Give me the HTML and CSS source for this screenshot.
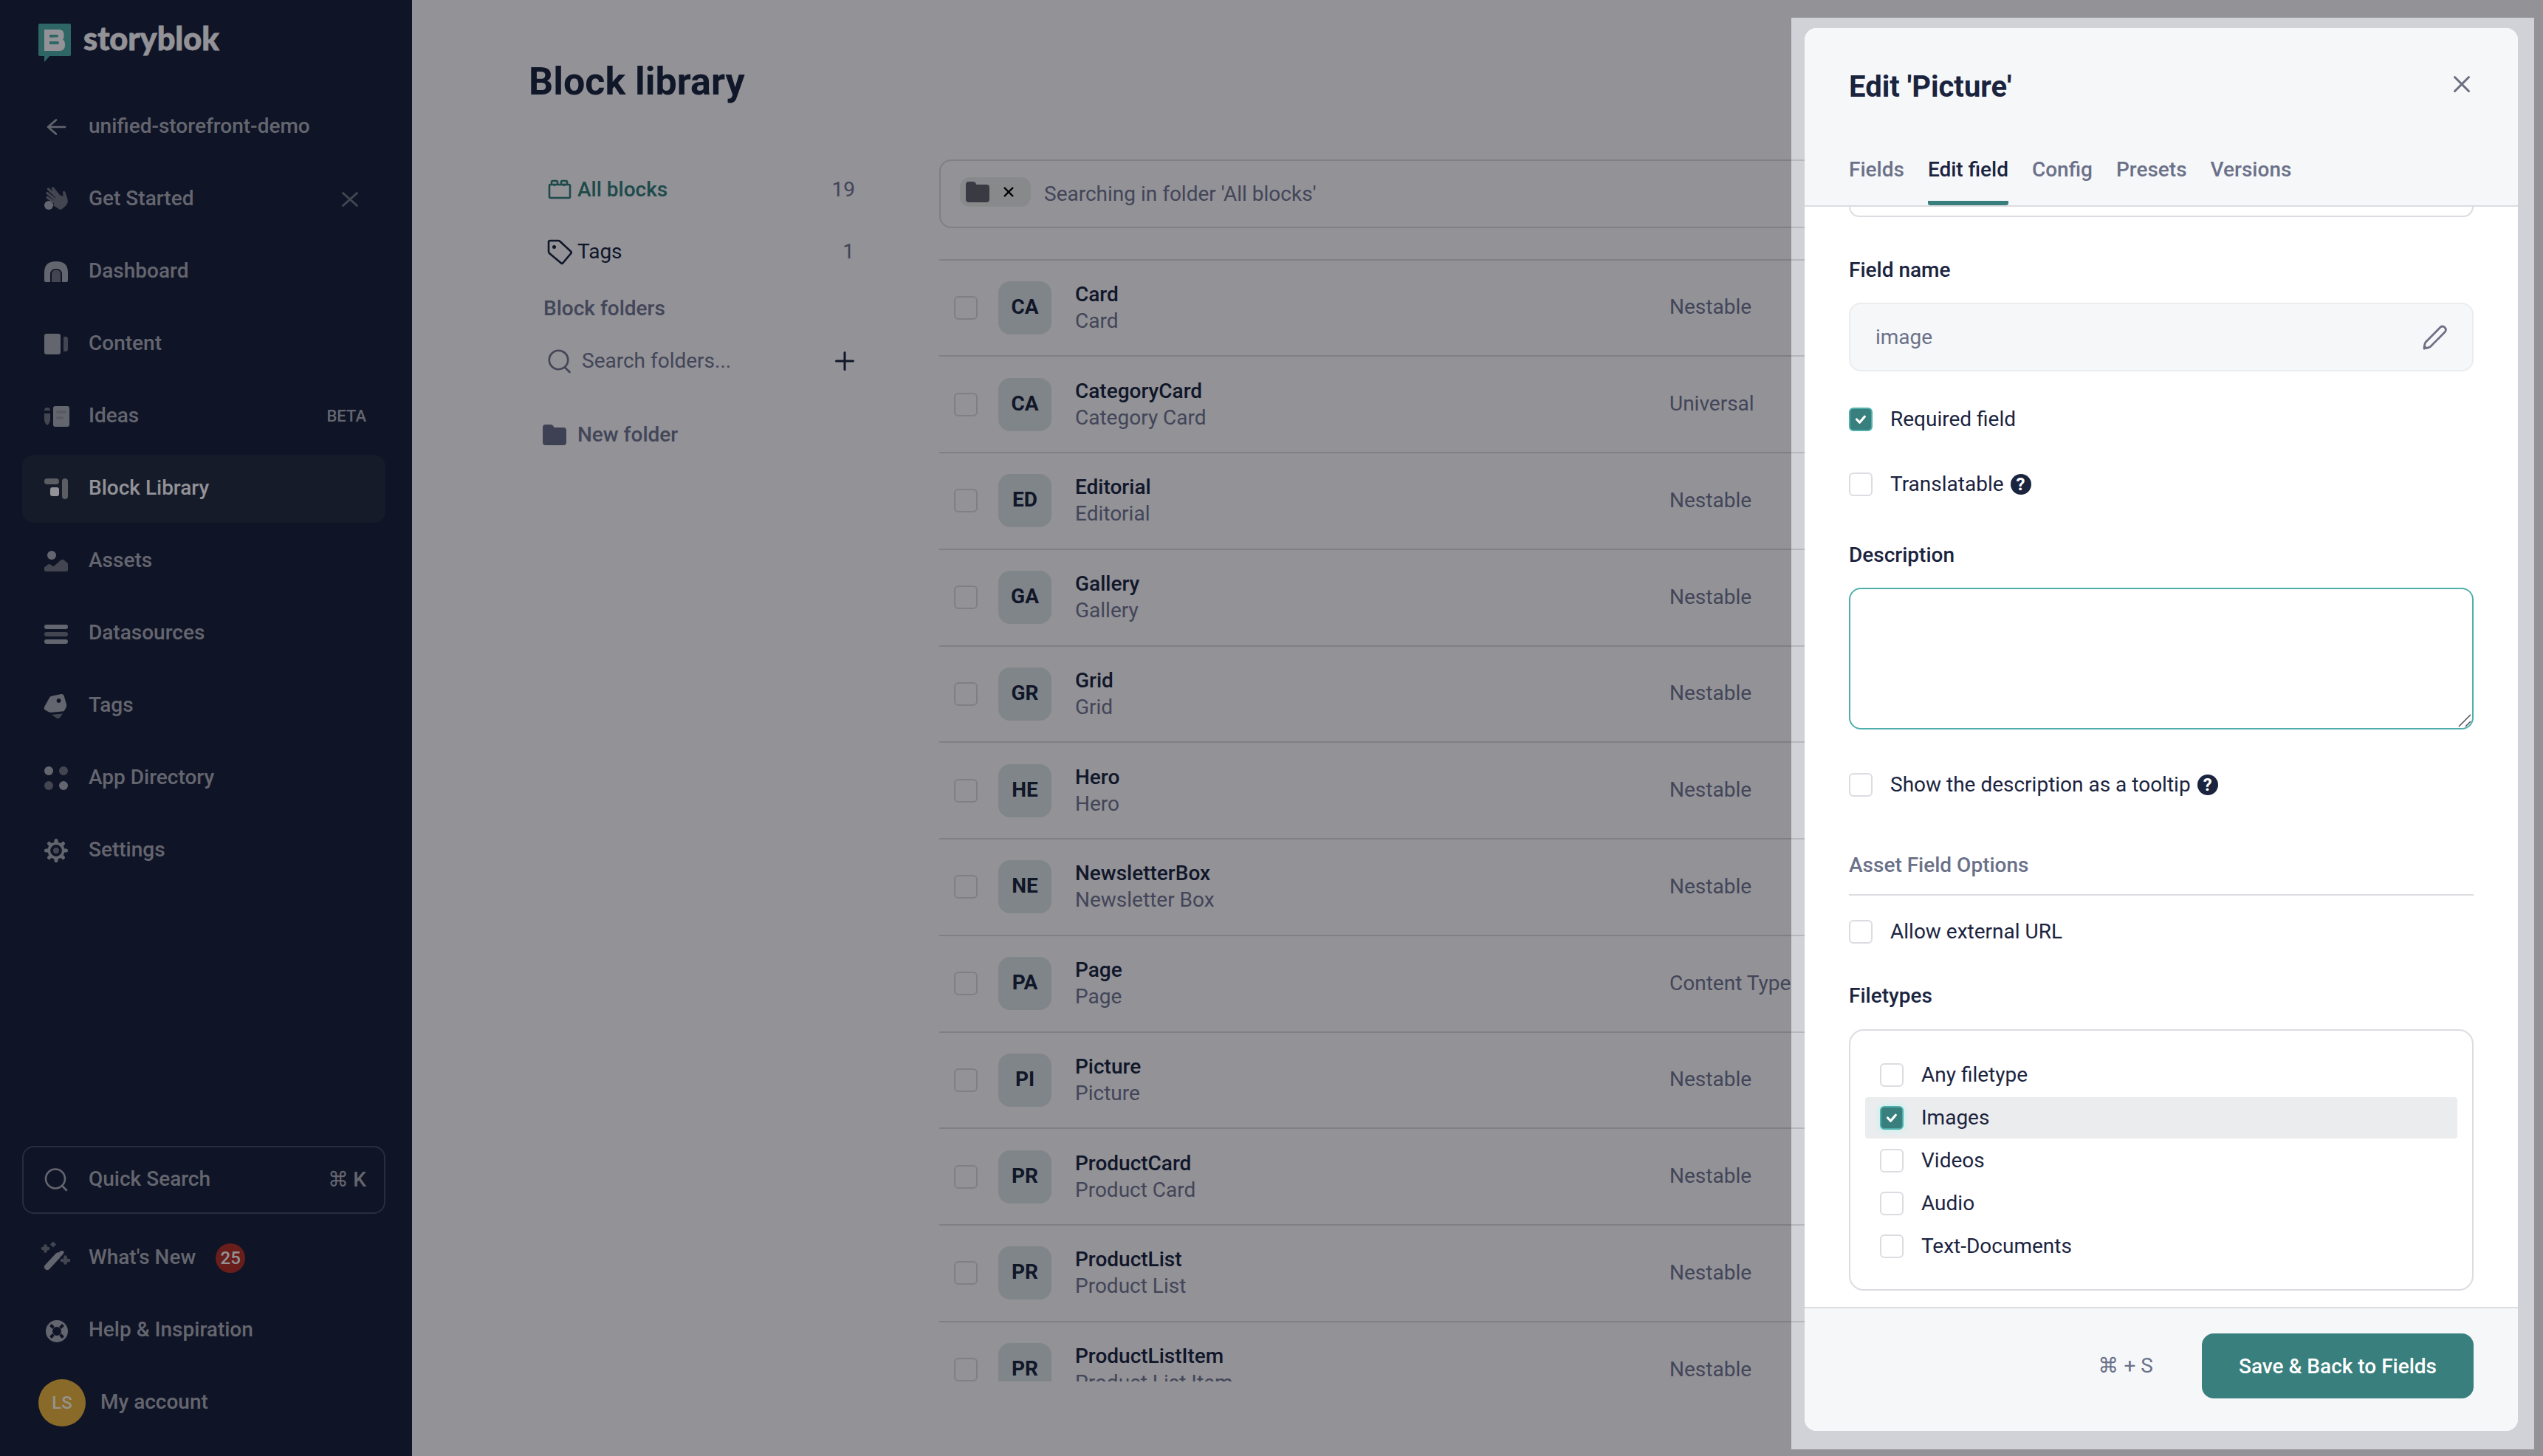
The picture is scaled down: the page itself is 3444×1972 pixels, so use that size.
FILE: index.html
```html
<!DOCTYPE html>
<html lang="en">
<head>
<meta charset="utf-8">
<title>Block library</title>
<link rel="stylesheet" href="styles.css">
</head>
<body>
<div class="app">
  <aside class="sidebar">
    <div class="logo">
      <svg width="44" height="52" viewBox="0 0 44 52">
        <rect class="brand" width="44" height="44" rx="2"/>
        <path class="brand" d="M8 43v9l8-9z"/>
        <rect class="bright" x="8" y="8" width="26.500" height="16" rx="6"/>
        <rect class="bright" x="8" y="20" width="28" height="17" rx="7"/>
        <rect class="bright" x="8" y="8" width="10" height="29"/>
        <rect class="brand" x="15" y="15" width="12" height="3.600" rx="1.800"/>
        <rect class="brand" x="15" y="24" width="13" height="4" rx="2"/>
        <rect class="brand" x="15" y="15" width="5" height="3.600"/>
        <rect class="brand" x="15" y="24" width="5" height="4"/>
      </svg>
      <svg class="wordmark" width="190" height="52" viewBox="0 0 190 52"><text x="0" y="36" textLength="184" lengthAdjust="spacingAndGlyphs">storyblok</text></svg>
    </div>
    <nav class="nav">
      <a class="nav-item"><svg class="icon" viewBox="0 0 32 32"><path class="line" d="M28 16H5M16 6.500 5 16l11 9.500"/></svg><span>unified-storefront-demo</span></a>
      <a class="nav-item"><svg class="icon" viewBox="0 0 32 32"><path class="dim" d="M12 24 21 30Q26 29 31 22Q32.500 19 31 14L28.500 6.500Q27 3.500 25 6L25.500 12 18 9Z"/><path class="finger" d="M19 15 12 1.500M17 14 11.500 1M22 14 12 1.500M20 16 5.500 2M18 19 4 7.500M17 22 4 13.500"/><circle class="fill" cx="6" cy="24" r="6"/></svg><span>Get Started</span><svg class="nav-close" viewBox="0 0 24 24"><path d="M2.500 3.500 21.500 20.500M21.500 3.500 2.500 20.500"/></svg></a>
      <a class="nav-item"><svg class="icon" viewBox="0 0 32 32"><path class="fill" d="M0 17Q0 2 16 2t16 15v11q0 2-2 2h-6V20q0-8-8-8t-8 8v10H2q-2 0-2-2z"/><path class="dim" d="M10 30V19.500q0-6 6-6t6 6V30z"/></svg><span>Dashboard</span></a>
      <a class="nav-item"><svg class="icon" viewBox="0 0 32 32"><rect class="fill" y="2" width="22" height="28" rx="3"/><path class="dim" d="M26 6h3q3 0 3 3v14q0 3-3 3h-3z"/></svg><span>Content</span></a>
      <a class="nav-item"><svg class="icon" viewBox="0 0 32 32"><path class="dim" d="M0 8q0-4 4-4t4 4zM0 12h8v9q-1 5-4 7-3-2-4-7z"/><rect class="fill" x="12" y="2" width="22" height="28" rx="3"/><path class="page-lines" d="M18 10h10M18 18h6"/></svg><span>Ideas</span><small class="beta">BETA</small></a>
      <a class="nav-item nav-item-active"><svg class="icon" viewBox="0 0 32 32"><rect class="mid" y="2" width="20" height="8" rx="4"/><rect class="mid" x="24" y="2" width="8" height="28" rx="4"/><rect class="bright" x="8" y="14" width="12" height="12" rx="3"/></svg><span>Block Library</span></a>
      <a class="nav-item"><svg class="icon" viewBox="0 0 32 32"><circle class="fill" cx="10" cy="8" r="6"/><path class="dim" d="M0 24.500 5 20.500q1.500-1 3 0l3 2q1.500 1 3-.5l8.500-7.500q2-1.500 4 0L32 19v9q0 2-2 2H2q-2 0-2-2z"/></svg><span>Assets</span></a>
      <a class="nav-item"><svg class="icon" viewBox="0 0 32 32"><rect class="fill" y="4" width="32" height="6" rx="3"/><rect class="dim" y="14" width="32" height="6" rx="3"/><rect class="fill" y="24" width="32" height="6" rx="3"/></svg><span>Datasources</span></a>
      <a class="nav-item"><svg class="icon" viewBox="0 0 32 32"><path class="fill" fill-rule="evenodd" d="M9 3 23 0q3-.5 3.700 2.500L30 14q.5 2-.5 4l-2 4q-1 1.500-3 1.500L9 25q-2 0-3.500-1L1 21.500q-2-1.500-1-4L7 5q.7-1.500 2-2zM19.500 6a3 3 0 1 0 .1 0z"/><path class="dim" d="M10 28l15-1.500-4 5.500q-1.500 2-4 .8z"/></svg><span>Tags</span></a>
      <a class="nav-item"><svg class="icon" viewBox="0 0 32 32"><circle class="fill" cx="6" cy="6" r="6"/><circle class="dim" cx="26" cy="6" r="6"/><circle class="dim" cx="6" cy="26" r="6"/><circle class="fill" cx="26" cy="26" r="6"/></svg><span>App Directory</span></a>
      <a class="nav-item"><svg class="icon" viewBox="0 0 32 32"><circle class="gear-ring" cx="16" cy="16" r="9.700"/><path class="gear-teeth" d="M16 2.500v2M16 27.500v2M2.500 16h2M27.500 16h2M6.500 6.500l2 2M23.500 23.500l2 2M25.500 6.500l-2 2M8.500 23.500l-2 2"/><circle class="dim" cx="16" cy="16" r="4"/></svg><span>Settings</span></a>
    </nav>
    <nav class="nav nav-bottom">
      <a class="nav-item nav-search"><svg class="icon" viewBox="0 0 32 32"><circle class="line" cx="15" cy="14.500" r="13"/><path class="line" d="M24.500 24.500 30 30"/></svg><span>Quick Search</span><kbd>⌘ K</kbd></a>
      <a class="nav-item"><svg class="icon" viewBox="0 0 32 32"><path class="wand" d="M4 28 18.500 12.500"/><path class="fill" d="M20 8q2-2.500 4.500-2t2 3L23.500 13 19.500 9z"/><path class="spark" d="M1.500-.5v7M-2 3H5M24 19h9M28.500 14.500v8"/><path class="dim" d="M12-6.500l4 4-4 4-4-4z"/></svg><span>What's New</span><b class="badge">25</b></a>
      <a class="nav-item"><svg class="icon" viewBox="0 0 32 32"><circle class="buoy" cx="17" cy="17" r="10.500"/><path class="buoy-gap" d="M8.500 8.500l4 4M21.500 21.500l4 4M25.500 8.500l-4 4M12.500 21.500l-4 4"/></svg><span>Help &amp; Inspiration</span></a>
      <a class="nav-item nav-account"><i class="user">LS</i><span>My account</span></a>
    </nav>
  </aside>

  <main class="main">
    <h1>Block library</h1>
    <div class="columns">
      <section class="folders">
        <div class="folder-row folder-row-active"><svg width="34" height="34" viewBox="0 0 34 34"><rect x="4" y="10" width="28" height="18" rx="1.500"/><path d="M7 10V6.500q0-1.500 1.500-1.500h5q1.500 0 1.500 1.500V10M20 10V6.500Q20 5 21.500 5h5Q28 5 28 6.500V10M11 10v1M24 10v1"/></svg><b>All blocks</b><em>19</em></div>
        <div class="folder-row"><svg width="34" height="34" viewBox="0 0 34 34"><path d="M3 4q0-2 2-2h11q1.500 0 2.500 1L33 16.500q1.500 1.500 0 3L22.500 32q-1.500 1.500-3 0L4 19q-1-1-1-2.500z"/><circle class="dot" cx="10.500" cy="10.500" r="2.500"/></svg><span>Tags</span><em class="one">1</em></div>
        <h2>Block folders</h2>
        <div class="folder-row folder-search"><svg width="34" height="34" viewBox="0 0 34 34"><circle cx="16.500" cy="15.500" r="12.700"/><path d="M26 26.500 31.500 32"/></svg><span>Search folders...</span><svg class="plus" width="26" height="26" viewBox="0 0 26 26"><path d="M1.500 13h23M13 1.500v23"/></svg></div>
        <div class="folder-row folder-new"><svg width="34" height="34" viewBox="0 0 34 34"><path d="M1 7q0-4 4-4h7q2 0 3 1.500L16.500 7H29q4 0 4 4v16q0 4-4 4H5q-4 0-4-4z"/></svg><b>New folder</b></div>
      </section>
      <section class="blocks">
        <div class="search-box">
          <span class="chip"><svg width="32" height="28" viewBox="0 0 32 28"><path d="M0 4q0-4 4-4h6q2 0 3 1.500L14.500 4H28q4 0 4 4v16q0 4-4 4H4q-4 0-4-4z"/></svg><svg width="14" height="14" viewBox="0 0 14 14"><path class="chip-x" d="M1 1l12 12M13 1 1 13"/></svg></span>
          <span>Searching in folder 'All blocks'</span>
        </div>
        <div class="block-list">
          <div class="block"><i class="check"></i><b class="initials">CA</b><div class="names"><strong>Card</strong><span>Card</span></div><span class="type">Nestable</span></div>
          <div class="block"><i class="check"></i><b class="initials">CA</b><div class="names"><strong>CategoryCard</strong><span>Category Card</span></div><span class="type">Universal</span></div>
          <div class="block"><i class="check"></i><b class="initials">ED</b><div class="names"><strong>Editorial</strong><span>Editorial</span></div><span class="type">Nestable</span></div>
          <div class="block"><i class="check"></i><b class="initials">GA</b><div class="names"><strong>Gallery</strong><span>Gallery</span></div><span class="type">Nestable</span></div>
          <div class="block"><i class="check"></i><b class="initials">GR</b><div class="names"><strong>Grid</strong><span>Grid</span></div><span class="type">Nestable</span></div>
          <div class="block"><i class="check"></i><b class="initials">HE</b><div class="names"><strong>Hero</strong><span>Hero</span></div><span class="type">Nestable</span></div>
          <div class="block"><i class="check"></i><b class="initials">NE</b><div class="names"><strong>NewsletterBox</strong><span>Newsletter Box</span></div><span class="type">Nestable</span></div>
          <div class="block"><i class="check"></i><b class="initials">PA</b><div class="names"><strong>Page</strong><span>Page</span></div><span class="type">Content Type</span></div>
          <div class="block"><i class="check"></i><b class="initials">PI</b><div class="names"><strong>Picture</strong><span>Picture</span></div><span class="type">Nestable</span></div>
          <div class="block"><i class="check"></i><b class="initials">PR</b><div class="names"><strong>ProductCard</strong><span>Product Card</span></div><span class="type">Nestable</span></div>
          <div class="block"><i class="check"></i><b class="initials">PR</b><div class="names"><strong>ProductList</strong><span>Product List</span></div><span class="type">Nestable</span></div>
          <div class="block"><i class="check"></i><b class="initials">PR</b><div class="names"><strong>ProductListItem</strong><span>Product List Item</span></div><span class="type">Nestable</span></div>
        </div>
      </section>
    </div>
  </main>
</div>

<div class="spotlight">
  <div class="modal">
    <header class="modal-head">
      <div class="modal-title"><h3>Edit 'Picture'</h3><svg width="22" height="22" viewBox="0 0 22 22"><path d="M1.500 1.500l19 19M20.500 1.500l-19 19"/></svg></div>
      <div class="tabs"><a>Fields</a><a class="tab-active">Edit field</a><a>Config</a><a>Presets</a><a>Versions</a></div>
    </header>
    <div class="modal-body">
      <div class="input-tail"></div>
      <h4 class="label-name">Field name</h4>
      <div class="input"><span>image</span><svg width="34" height="34" viewBox="0 0 34 34"><path d="M4 23.500 24 3.200q3-2.400 6 .3 2.700 3 .3 6L10.500 29.500Q9 31 2 32 2.500 25.500 4 23.500z"/><path d="M2 32l3-2.500"/></svg></div>
      <div class="option option-required"><i class="check check-on"><svg viewBox="0 0 28 28"><path d="M8.500 14l4 4.200 6.800-8"/></svg></i><span>Required field</span></div>
      <div class="option option-translate"><i class="check"></i><span>Translatable</span><i class="help">?</i></div>
      <h4 class="label-description">Description</h4>
      <div class="textarea"><svg width="18" height="18" viewBox="0 0 18 18"><path d="M1 17 17 1M10 17l7-7"/></svg></div>
      <div class="option option-tooltip"><i class="check"></i><span>Show the description as a tooltip</span><i class="help">?</i></div>
      <h5>Asset Field Options</h5>
      <div class="option option-external"><i class="check"></i><span>Allow external URL</span></div>
      <h4 class="label-types">Filetypes</h4>
      <div class="types">
        <div class="option"><i class="check"></i><span>Any filetype</span></div>
        <div class="option option-selected"><i class="check check-on"><svg viewBox="0 0 28 28"><path d="M8.500 14l4 4.200 6.800-8"/></svg></i><span>Images</span></div>
        <div class="option"><i class="check"></i><span>Videos</span></div>
        <div class="option"><i class="check"></i><span>Audio</span></div>
        <div class="option"><i class="check"></i><span>Text-Documents</span></div>
      </div>
    </div>
    <footer class="modal-foot"><span>⌘ + S</span><button>Save &amp; Back to Fields</button></footer>
  </div>
</div>
</body>
</html>
```

FILE: styles.css
```css
* { box-sizing: border-box; }
body {
  margin: 0;
  width: 3444px;
  height: 1972px;
  overflow: hidden;
  position: relative;
  background: #d1d1d8;
  font: 400 28px/36px Roboto, "DejaVu Sans", sans-serif;
  color: #18213c;
}
i, em { font-style: normal; }
svg { display: block; flex: none; overflow: visible; }
h1, h2, h3, h4, h5 { margin: 0; }
.app { display: flex; height: 1972px; }

/* Sidebar */
.sidebar {
  width: 558px;
  flex: none;
  display: flex;
  flex-direction: column;
  padding: 32px 36px 26px 30px;
  background: #181e38;
  color: #90939f;
}
.logo { display: flex; gap: 17px; height: 94px; padding-left: 22px; }
.wordmark text { font: 900 43px Lato, sans-serif; fill: #d1d1d8; stroke: #d1d1d8; stroke-width: .8px; }
.brand { fill: #429393; }
.bright { fill: #d1d1d8; }
.fill { fill: #90939f; }
.mid { fill: #83868f; }
.dim { fill: #616475; }
.line { fill: none; stroke: #90939f; stroke-width: 2.6; stroke-linecap: round; stroke-linejoin: round; }
.finger { fill: none; stroke: #616475; stroke-width: 3.4; stroke-linecap: round; }
.page-lines { fill: none; stroke: #7f828d; stroke-width: 4; stroke-linecap: round; }
.gear-ring { fill: none; stroke: #90939f; stroke-width: 3.6; }
.gear-teeth { fill: none; stroke: #90939f; stroke-width: 5; stroke-linecap: round; }
.wand { stroke: #90939f; stroke-width: 8; stroke-linecap: round; }
.spark { stroke: #616475; stroke-width: 4.6; stroke-linecap: round; }
.buoy { fill: none; stroke: #90939f; stroke-width: 9; }
.buoy-gap { stroke: #181e38; stroke-width: 4; }
.nav { display: flex; flex-direction: column; gap: 6px; }
.nav-item {
  display: flex;
  align-items: center;
  height: 92px;
  padding: 0 26px 0 30px;
  border-radius: 16px;
  font-weight: 500;
}
.nav-item span { padding-bottom: 3px; margin-left: 28px; }
.icon { width: 32px; height: 32px; }
.nav-close { width: 24px; height: 24px; margin: 0 10px 0 auto; fill: none; stroke: #616475; stroke-width: 3; stroke-linecap: round; }
.beta { margin-left: auto; font-size: 22px; }
.nav-item-active { background: #20273c; color: #d1d1d8; }
.nav-bottom { margin-top: auto; }
.nav-search { border: 2px solid #3c3f53; padding: 0 24px 0 28px; margin-bottom: 8px; }
.nav-search kbd { margin-left: auto; font: inherit; word-spacing: -1px; padding-bottom: 1px; }
.badge {
  width: 40px;
  margin-left: 27px;
  border-radius: 20px;
  background: #972c27;
  color: #d1d1d8;
  font: 500 24px/40px Roboto, sans-serif;
  text-align: center;
}
.nav-account { padding-left: 22px; }
.nav-account span { margin-left: 20px; }
.user {
  width: 64px;
  border-radius: 32px;
  background: #c4993b;
  color: #d8d2c8;
  font: 500 24px/64px Roboto, sans-serif;
  text-align: center;
}

/* Main area */
.main { flex: 1; padding: 80px 72px 0 158px; }
h1 { height: 134px; font-size: 52px; line-height: 62px; font-weight: 700; }
.columns { display: flex; gap: 114px; }
.folders { width: 422px; margin-left: 20px; padding-top: 1px; flex: none; color: #60647f; }
.folder-row { display: flex; align-items: center; height: 84px; padding-left: 4px; }
.folder-row svg { fill: none; stroke: currentColor; stroke-width: 2.6; stroke-linecap: round; stroke-linejoin: round; }
.folder-row svg .dot { fill: currentColor; stroke: none; }
.folder-row > span { margin-left: 8px; color: #18213c; }
.folder-row > b { margin-left: 8px; font-weight: 500; }
.folder-row em { margin-left: auto; }
.folder-row em.one { padding-right: 1px; }
.folder-row:nth-child(2) { color: #18213c; }
.folder-row:nth-child(2) em { color: #60647f; }
.folder-row-active > svg, .folder-row-active > b { color: #2c6a6b; }
h2 { font-size: 28px; line-height: 70px; font-weight: 500; }
.folder-search { height: 72px; margin-bottom: 28px; }
.folder-search > span { margin-left: 14px; color: #60647f; }
.folder-search .plus { margin: 0 1px 0 auto; color: #18213c; stroke-width: 3; }
.folder-new { height: 72px; padding-left: 0; margin-left: -2px; }
.folder-new svg { fill: #5a5d79; stroke: none; }
.folder-new > b { margin-left: 14px; }

.blocks { flex: 1; padding-top: 2px; }
.search-box {
  display: flex;
  align-items: center;
  height: 93px;
  padding: 0 26px;
  border: 2px solid #b8b7be;
  border-radius: 16px;
  color: #60647f;
}
.chip { display: flex; align-items: center; gap: 19px; width: 96px; height: 40px; padding-left: 8px; margin: 0 18px 5px 0; border-radius: 14px; background: #c2c4c8; fill: #535461; }
.chip-x { stroke: #000; stroke-width: 2.4; }
.block-list { height: 1520px; margin-top: 41.6px; overflow: hidden; }
.block { display: flex; align-items: center; height: 130.75px; padding-left: 20px; border-top: 2px solid #b6b6bf; }
.check { flex: none; width: 32px; height: 32px; border: 2px solid #b8b7bf; border-radius: 6px; }
.initials { width: 72px; height: 72px; margin: 0 32px 0 28px; border-radius: 16px; background: #b8bfc4; font-weight: 700; line-height: 69px; text-align: center; }
.names { display: flex; flex-direction: column; width: 805px; color: #60647f; }
.names strong { font-weight: 500; color: #18213c; }
.type { padding-bottom: 1px; color: #60647f; }

/* Modal with dimmed surroundings */
.spotlight {
  position: absolute;
  left: 2426px;
  top: 24px;
  width: 1006px;
  height: 1939px;
  padding: 14px 22px 25px 18px;
  box-shadow: 0 0 0 4000px rgba(0, 0, 0, .3);
}
.modal {
  display: flex;
  flex-direction: column;
  height: 1900px;
  border-radius: 16px;
  overflow: hidden;
  background: #fff;
  color: #1b243f;
}
.modal-head { height: 242px; padding: 0 60px; background: #f6f7f9; border-bottom: 2px solid #dcdde0; }
.modal-title { display: flex; justify-content: space-between; height: 158px; padding: 55px 5px 0 0; }
.modal-title svg { margin-top: 10px; fill: none; stroke: #6b6d81; stroke-width: 3; stroke-linecap: round; }
h3 { font-size: 40px; line-height: 50px; font-weight: 700; }
.tabs { display: flex; gap: 32px; color: #6b7189; font-weight: 500; }
.tabs a { height: 82px; line-height: 68px; }
.tab-active { color: #1b243f; border-bottom: 6px solid #387f7d; border-radius: 3px; }
.modal-body { flex: 1; padding: 0 60px; }
.modal .check { border-color: #dcdce2; background: #fff; }
.input-tail { height: 14px; border: 2px solid #dcdce2; border-top: 0; border-radius: 0 0 14px 14px; }
h4 { font-size: 28px; line-height: 36px; font-weight: 500; }
.label-name { margin: 54px 0 26px; }
.input { display: flex; align-items: center; justify-content: space-between; height: 93px; padding: 0 33px 0 34px; border: 2px solid #ebecee; border-radius: 16px; background: #f6f7f9; color: #6b7189; }
.input svg { fill: none; stroke: #6f7085; stroke-width: 2.8; stroke-linejoin: round; }
.option { display: flex; align-items: center; height: 56px; }
.option > span { margin-left: 24px; }
.modal .check-on { border-color: #4fafac; background: #387f7d; }
.check-on svg { fill: none; stroke: #fff; stroke-width: 3.2; stroke-linecap: round; stroke-linejoin: round; }
.help { width: 28px; height: 28px; margin-left: 9px; border-radius: 14px; background: #1b243f; color: #fff; font: 700 24px/28px Roboto, sans-serif; text-align: center; }
.option-required { margin-top: 37px; }
.option-translate { margin-top: 32px; }
.label-description { margin: 50px 0 26px; }
.textarea { height: 192px; display: flex; align-items: flex-end; justify-content: flex-end; border: 2px solid #4fafac; border-radius: 16px; }
.textarea svg { fill: none; stroke: #55565c; stroke-width: 1.6; margin: 0 1px 1px 0; }
.option-tooltip { margin-top: 47px; }
h5 { margin-top: 62px; height: 60px; padding-top: 1px; border-bottom: 2px solid #dcdce2; font-size: 28px; line-height: 36px; font-weight: 500; color: #6b7189; }
.option-external { margin-top: 21px; }
.label-types { margin: 41px 0 27px; }
.types { height: 354px; padding: 32px 20px 0; border: 2px solid #dcdce2; border-radius: 20px; }
.types .option { padding-left: 20px; margin-bottom: 2px; border-radius: 4px; }
.option-selected { background: #ebecee; }
.option-selected .check { box-shadow: 0 0 6px 2px #c9f3ef; }
.modal-foot { display: flex; justify-content: flex-end; align-items: center; height: 168px; flex: none; padding: 0 60px 10px; border-top: 2px solid #dcdde0; background: #f6f7f9; color: #6b7189; }
.modal-foot button { width: 368px; height: 88px; margin-left: 66px; border: 0; border-radius: 16px; background: #387f7d; color: #fff; font: 500 28px Roboto, sans-serif; }
```
